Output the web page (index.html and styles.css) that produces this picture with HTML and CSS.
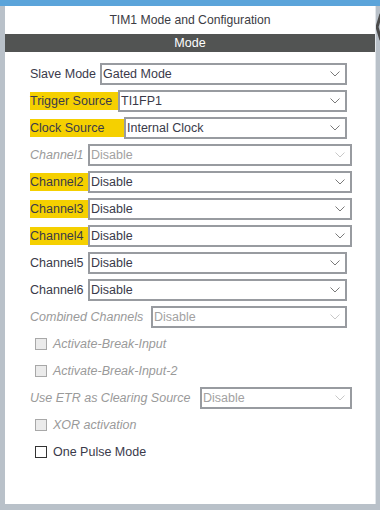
FILE: index.html
```html
<!DOCTYPE html>
<html lang="en">

    <head>
        <meta charset="UTF-8">
        <meta name="viewport" content="width=device-width, initial-scale=1.0">
        <title>TIM1 Mode and Configuration</title>
        <link rel="stylesheet" href="styles.css">
    </head>

    <body>
        <div class="topbar"></div>
        <div class="frame">
            <div class="panel">
                <div class="title">TIM1 Mode and Configuration</div>
                <div class="section">Mode</div>

                <div class="form">
                    <div class="row">
                        <span class="label w-slave">Slave Mode</span>
                        <div class="select"><span>Gated Mode</span><svg class="chev" width="10" height="6" viewBox="0 0 10 6"><polyline points="0.5,0.5 5,5 9.5,0.5"/></svg></div>
                    </div>
                    <div class="row">
                        <span class="label mark w-trigger">Trigger Source</span>
                        <div class="select"><span>TI1FP1</span><svg class="chev" width="10" height="6" viewBox="0 0 10 6"><polyline points="0.5,0.5 5,5 9.5,0.5"/></svg></div>
                    </div>
                    <div class="row">
                        <span class="label mark w-clock">Clock Source</span>
                        <div class="select"><span>Internal Clock</span><svg class="chev" width="10" height="6" viewBox="0 0 10 6"><polyline points="0.5,0.5 5,5 9.5,0.5"/></svg></div>
                    </div>
                    <div class="row wide">
                        <span class="label off w-channel">Channel1</span>
                        <div class="select off"><span>Disable</span><svg class="chev" width="10" height="6" viewBox="0 0 10 6"><polyline points="0.5,0.5 5,5 9.5,0.5"/></svg></div>
                    </div>
                    <div class="row wide">
                        <span class="label mark w-channel">Channel2</span>
                        <div class="select"><span>Disable</span><svg class="chev" width="10" height="6" viewBox="0 0 10 6"><polyline points="0.5,0.5 5,5 9.5,0.5"/></svg></div>
                    </div>
                    <div class="row wide">
                        <span class="label mark w-channel">Channel3</span>
                        <div class="select"><span>Disable</span><svg class="chev" width="10" height="6" viewBox="0 0 10 6"><polyline points="0.5,0.5 5,5 9.5,0.5"/></svg></div>
                    </div>
                    <div class="row wide">
                        <span class="label mark w-channel">Channel4</span>
                        <div class="select"><span>Disable</span><svg class="chev" width="10" height="6" viewBox="0 0 10 6"><polyline points="0.5,0.5 5,5 9.5,0.5"/></svg></div>
                    </div>
                    <div class="row">
                        <span class="label w-channel">Channel5</span>
                        <div class="select"><span>Disable</span><svg class="chev" width="10" height="6" viewBox="0 0 10 6"><polyline points="0.5,0.5 5,5 9.5,0.5"/></svg></div>
                    </div>
                    <div class="row">
                        <span class="label w-channel">Channel6</span>
                        <div class="select"><span>Disable</span><svg class="chev" width="10" height="6" viewBox="0 0 10 6"><polyline points="0.5,0.5 5,5 9.5,0.5"/></svg></div>
                    </div>
                    <div class="row">
                        <span class="label off w-combined">Combined Channels</span>
                        <div class="select off"><span>Disable</span><svg class="chev" width="10" height="6" viewBox="0 0 10 6"><polyline points="0.5,0.5 5,5 9.5,0.5"/></svg></div>
                    </div>
                    <div class="row check">
                        <span class="box off"></span>
                        <span class="label off">Activate-Break-Input</span>
                    </div>
                    <div class="row check">
                        <span class="box off"></span>
                        <span class="label off">Activate-Break-Input-2</span>
                    </div>
                    <div class="row wide">
                        <span class="label off w-etr">Use ETR as Clearing Source</span>
                        <div class="select off"><span>Disable</span><svg class="chev" width="10" height="6" viewBox="0 0 10 6"><polyline points="0.5,0.5 5,5 9.5,0.5"/></svg></div>
                    </div>
                    <div class="row check">
                        <span class="box off"></span>
                        <span class="label off">XOR activation</span>
                    </div>
                    <div class="row check">
                        <span class="box"></span>
                        <span class="label">One Pulse Mode</span>
                    </div>
                </div>
            </div>
            <div class="gutter">
                <svg class="grip" width="6" height="28" viewBox="0 0 6 28"><polyline points="5,1 1,14 5,27"/></svg>
            </div>
        </div>
    </body>

</html>
```

FILE: styles.css
```css
body {
    font-family: "Liberation Sans", Arial, sans-serif;
    font-size: 12.5px;
    color: #3a3a4a;
    background-color: #b9c1c9;
    margin: 0;
    padding: 0;
    height: 510px;
    overflow: hidden;
}

.topbar {
    height: 6px;
    background: #5ba4da;
}

.frame {
    display: flex;
    height: 498px;
    padding-left: 5px;
}

.panel {
    width: 370px;
    background: #fff;
}

.title {
    height: 28px;
    line-height: 28px;
    text-align: center;
    font-size: 12.2px;
    color: #3c3c44;
}

.section {
    height: 18px;
    line-height: 18px;
    text-align: center;
    background: #525453;
    color: #fff;
}

.form {
    padding-top: 8px;
}

.row {
    display: flex;
    align-items: center;
    height: 27px;
    padding: 0 28px 0 25px;
}

.row.wide {
    padding-right: 23px;
}

.label {
    flex: none;
    line-height: 18px;
    white-space: nowrap;
}

.label.mark {
    background: #f5d000;
}

.label.off {
    color: #9a9a9a;
    font-style: italic;
}

.w-slave { width: 70px; }
.w-trigger { width: 88px; }
.w-clock { width: 94px; }
.w-channel { width: 58px; }
.w-combined { width: 121px; }
.w-etr { width: 170px; }

.select {
    flex: 1;
    display: flex;
    align-items: center;
    justify-content: space-between;
    height: 22px;
    box-sizing: border-box;
    border: 2px solid #989ba0;
    padding: 0 5px 0 1px;
    white-space: nowrap;
}

.chev {
    fill: none;
    stroke: #7a7a7a;
    stroke-width: 1;
}

.select.off span {
    color: #a2a2a2;
}

.select.off .chev {
    stroke: #c8c8c8;
}

.row.check {
    padding-left: 30px;
}

.box {
    flex: none;
    width: 12px;
    height: 12px;
    box-sizing: border-box;
    border: 1px solid #333;
    background: #fff;
    margin-right: 6px;
}

.box.off {
    border-color: #a8a8a8;
    background: #ebebeb;
}

.gutter {
    position: relative;
    width: 4px;
    border-left: 1px solid #e2e6ea;
}

.grip {
    position: absolute;
    top: 7px;
    left: 0;
    fill: none;
    stroke: #4a4a4a;
    stroke-width: 3;
}
```
